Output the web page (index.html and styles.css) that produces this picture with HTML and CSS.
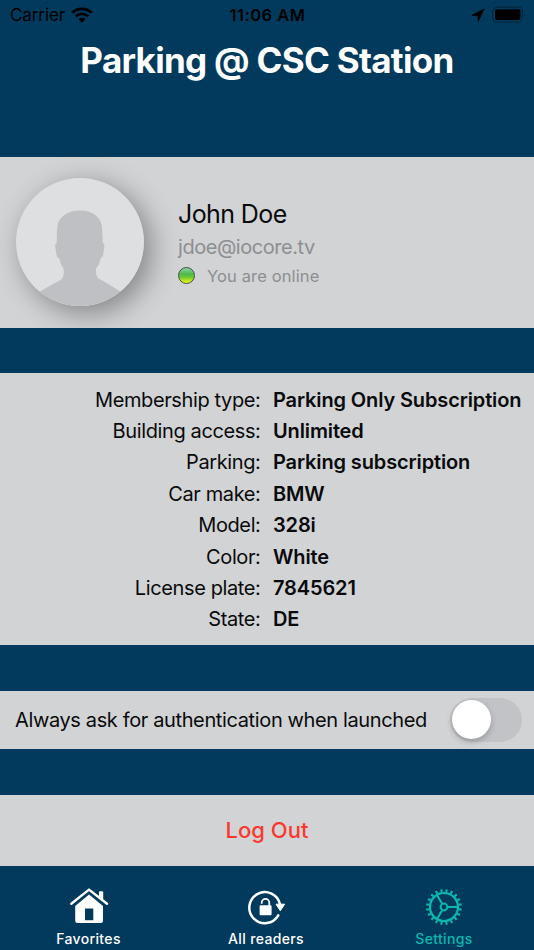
FILE: index.html
```html
<!DOCTYPE html>
<html lang="en">
<head>
<meta charset="utf-8">
<title>Parking @ CSC Station</title>
<link rel="stylesheet" href="styles.css">
</head>
<body>
<header class="top">
  <div class="status">
    <div class="status-left">
      <span class="carrier">Carrier</span>
      <svg class="wifi" width="22" height="16" viewBox="0 0 22 16">
        <path d="M1.3 5.8a14 14 0 0 1 19.4 0" fill="none" stroke="#000" stroke-width="2.9"/>
        <path d="M4.8 9.4a9 9 0 0 1 12.4 0" fill="none" stroke="#000" stroke-width="2.7"/>
        <path d="M7.5 12.2a5 5 0 0 1 7 0L11 15.7z"/>
      </svg>
    </div>
    <span class="time">11:06 AM</span>
    <div class="status-right">
      <svg width="14" height="14" viewBox="0 0 14 14"><path d="M13 1 1 7.2l5.9.3.4 5.7z" stroke="#000" stroke-width=".8" stroke-linejoin="round"/></svg>
      <svg width="35" height="18" viewBox="0 0 35 18">
        <rect x=".9" y="1.1" width="29.6" height="15" rx="4" fill="none" stroke="#02263f" stroke-width="1.2"/>
        <rect x="3" y="3.2" width="25.4" height="10.8" rx="2"/>
        <path d="M32.2 6.2q1.8 2.4 0 4.8z" fill="#02263f"/>
      </svg>
    </div>
  </div>
  <h1 class="title">Parking @ CSC Station</h1>
</header>

<main>
  <section class="card profile">
    <svg class="avatar" width="128" height="128" viewBox="0 0 128 128">
      <defs><clipPath id="face"><circle cx="64" cy="64" r="64"/></clipPath></defs>
      <circle cx="64" cy="64" r="64" fill="#dedfe1"/>
      <path clip-path="url(#face)" fill="#bfc0c4" d="M64 32.500c12 0 20.500 6 21.800 15.500.7 5.500 1 11.500 1 17.300q2-.7 1.500 3.700l-1.200 8q-.6 3.300-2.600 3-.7 6.500-4.500 10.500-.5 7.500 2.500 10 3.500 1.800 9 5L105 114v18H23v-18l15-8.500c4-2.300 7.500-3.200 8.600-5.500q1.900-3.500.9-9.500-3.300-4.500-4.300-10.500-2.200.4-2.700-3l-1.200-8q-.5-4.400 1.500-3.700c-.2-5.800 0-11.800.7-17.300C42.800 38.500 52 32.500 64 32.500z"/>
    </svg>
    <div class="identity">
      <div class="name">John Doe</div>
      <div class="email">jdoe@iocore.tv</div>
      <div class="online"><i class="dot"></i><span>You are online</span></div>
    </div>
  </section>

  <dl class="card details">
    <dt>Membership type:</dt><dd>Parking Only Subscription</dd>
    <dt>Building access:</dt><dd>Unlimited</dd>
    <dt>Parking:</dt><dd>Parking subscription</dd>
    <dt>Car make:</dt><dd>BMW</dd>
    <dt>Model:</dt><dd>328i</dd>
    <dt>Color:</dt><dd>White</dd>
    <dt>License plate:</dt><dd>7845621</dd>
    <dt>State:</dt><dd>DE</dd>
  </dl>

  <section class="card auth">
    <span>Always ask for authentication when launched</span>
    <div class="switch"><div class="knob"></div></div>
  </section>

  <div class="card logout">Log Out</div>
</main>

<nav class="tabs">
  <div class="tab">
    <svg width="40" height="40" viewBox="0 0 40 40" fill="#fff">
      <path d="M30 5.300q0-1 1-1h2.200q1 0 1 1v8.500l-4.200-3.600z"/>
      <path d="M2.300 16.800 20 2.600l18 14.200" fill="none" stroke="#fff" stroke-width="2.400" stroke-linecap="round" stroke-linejoin="round"/>
      <path fill-rule="evenodd" d="M20 7.400 34 19V33.400q0 2.500-2.500 2.500H8.700Q6.200 35.900 6.200 33.400V19zM16 21.500v11.700h8.300V21.500z"/>
    </svg>
    <span>Favorites</span>
  </div>
  <div class="tab">
    <svg width="40" height="40" viewBox="0 0 40 40">
      <g transform="translate(-.7 0)">
        <path d="M34.600 17A15.500 15.500 0 1 0 33 28.300" fill="none" stroke="#fff" stroke-width="2.500" stroke-linecap="round"/>
        <path d="M30.700 17.200h8.600L35 23.800z" fill="#fff" stroke="#fff" stroke-width="1" stroke-linejoin="round"/>
        <rect x="14.300" y="18.200" width="12" height="10" rx="1.200" fill="#fff"/>
        <path d="M16.400 16.700v-1a3.800 3.800 0 0 1 7.600 0v3" fill="none" stroke="#fff" stroke-width="1.800"/>
      </g>
    </svg>
    <span>All readers</span>
  </div>
  <div class="tab active">
    <svg width="40" height="40" viewBox="0 0 40 40" fill="none" stroke="#0bb9ae">
      <circle cx="20" cy="20" r="14" stroke-width="2.200"/>
      <circle cx="20" cy="20" r="16.300" stroke-width="3.200" pathLength="200" stroke-dasharray="4 6" stroke-dashoffset="-3"/>
      <circle cx="20" cy="20" r="3.400" stroke-width="2"/>
      <path d="M24 20h9.500M18 16.500l-5-8.600M18 23.500l-5 8.600" stroke-width="2"/>
    </svg>
    <span>Settings</span>
  </div>
</nav>
</body>
</html>
```
FILE: styles.css
```css
* { box-sizing: border-box; }
html { background: #013a5c; }
body {
  margin: 0;
  width: 534px;
  height: 950px;
  overflow: hidden;
  display: flex;
  flex-direction: column;
  background: #013a5c;
  color: #090a0b;
  font-family: Inter, Roboto, "Liberation Sans", sans-serif;
  white-space: nowrap;
}
.top { height: 157px; color: #fff; }
.status {
  height: 30px;
  display: grid;
  grid-template-columns: 1fr auto 1fr;
  align-items: center;
  padding: 0 7px 0 10px;
  color: #000;
  font-size: 17px;
}
.status-left { display: flex; align-items: center; gap: 7px; }
.carrier { letter-spacing: -.1px; }
.wifi { margin-left: -1px; }
.time { font-weight: 600; font-size: 16.500px; letter-spacing: .5px; margin-right: 2px; }
.status-right { display: flex; justify-content: flex-end; align-items: center; gap: 7px; }
.title {
  margin: 7px 0 0;
  font-size: 35px;
  line-height: 46px;
  font-weight: 700;
  letter-spacing: -.7px;
  text-align: center;
}
main { display: flex; flex-direction: column; }
.card { background: #d2d3d5; }
.profile { height: 171px; display: flex; padding: 21px 16px; margin-bottom: 45px; overflow: hidden; }
.avatar { border-radius: 50%; box-shadow: 7px 7px 28px rgba(0, 0, 0, .38); flex: none; }
.identity { margin-left: 34px; padding-top: 19px; }
.name { font-size: 25px; line-height: 34px; letter-spacing: -.6px; }
.email { color: #8d8e91; font-size: 20px; line-height: 32px; letter-spacing: -.45px; }
.online { display: flex; align-items: center; gap: 12px; height: 25px; color: #8d8e91; font-size: 16.500px; letter-spacing: .12px; }
.dot {
  width: 17px;
  height: 17px;
  border: 1.500px solid #405044;
  border-radius: 50%;
  background: linear-gradient(#85d09a 5%, #4fb84a 40%, #68c638 60%, #e5f510 95%);
}
.details {
  margin: 0 0 45.600px;
  height: 272px;
  padding: 11.800px 12px 0 0;
  display: grid;
  grid-template-columns: 260.500px 1fr;
  grid-auto-rows: 31.350px;
  column-gap: 12.500px;
  align-content: start;
  font-size: 20px;
  line-height: 31px;
}
.details dt { text-align: right; letter-spacing: -.38px; }
.details dd { margin: 0; font-weight: 600; letter-spacing: -.13px; }
.auth {
  height: 58.400px;
  margin-bottom: 46px;
  padding: 0 12px 0 15px;
  display: flex;
  align-items: center;
  justify-content: space-between;
  font-size: 20px;
  letter-spacing: -.37px;
}
.switch { width: 72px; height: 44px; border-radius: 22px; padding: 2px; background: #c2c3c7; }
.knob { width: 39px; height: 39px; border-radius: 50%; background: #fff; box-shadow: 0 3px 6px rgba(0, 0, 0, .22); }
.logout {
  height: 71px;
  line-height: 71px;
  text-align: center;
  color: #fb3830;
  font-size: 22px;
  font-weight: 500;
}
.tabs { height: 84px; display: grid; grid-template-columns: 177px 178px 178px; color: #fff; font-size: 14px; font-weight: 500; }
.tab { display: flex; flex-direction: column; align-items: center; padding-top: 21px; }
.tab span { line-height: 22px; margin-top: 1px; letter-spacing: .35px; }
.active { color: #0bb9ae; }
```
